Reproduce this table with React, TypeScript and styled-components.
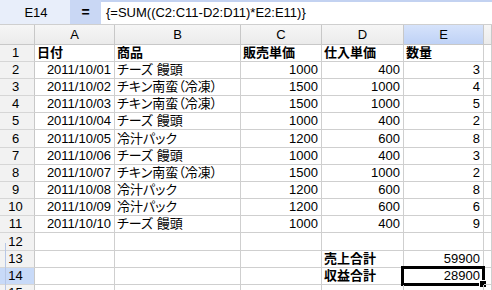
import React from 'react';
import styled, { createGlobalStyle } from 'styled-components';

const GlobalStyle = createGlobalStyle`
  body {
    margin: 0;
    background: #ffffff;
    font-family: "Liberation Sans", "Noto Sans CJK JP", sans-serif;
    font-size: 13px;
    color: #000;
  }
`;

const Sheet = styled.div`
  width: 492px;
  height: 290px;
  overflow: hidden;
  position: relative;
  background: #fff;
`;

const FormulaBar = styled.div`
  display: flex;
  height: 24px;
  background: #e8eefa;
`;

const NameBox = styled.div`
  width: 70px;
  display: flex;
  align-items: center;
  justify-content: center;
  padding-left: 2px;
  box-sizing: border-box;
`;

const EqualsBox = styled.div`
  width: 31px;
  display: flex;
  align-items: center;
  justify-content: center;
  background: #c9d7f4;
  font-weight: bold;
  font-size: 14px;
`;

const FormulaInput = styled.div`
  flex: 1;
  background: #fff;
  border-top: 2px solid #c3d2f1;
  display: flex;
  align-items: center;
  padding-left: 5px;
  padding-bottom: 2px;
  box-sizing: border-box;
`;

const Grid = styled.div`
  display: grid;
  grid-template-columns: 35px 80px 126px 81px 82px 80px 1fr;
  grid-template-rows: 20px 16.6px repeat(14, 17.2px);
  border-top: 1px solid #cfcfcf;
`;

const ColHead = styled.div<{ $active?: boolean }>`
  box-sizing: border-box;
  border-right: 1px solid #c8c8c8;
  border-bottom: 1px solid #c8c8c8;
  background: ${(p) =>
    p.$active
      ? 'linear-gradient(#d6e3fb, #bfd2f6)'
      : 'linear-gradient(#f6f6f6, #ebebeb)'};
  display: flex;
  align-items: center;
  justify-content: center;
  font-size: 13px;
`;

const RowHead = styled.div<{ $active?: boolean }>`
  box-sizing: border-box;
  border-right: 1px solid #c8c8c8;
  border-bottom: 1px solid #d6d6d6;
  background: ${(p) => (p.$active ? '#c8daf8' : '#f2f2f2')};
  display: flex;
  align-items: flex-end;
  justify-content: center;
  padding-right: 3px;
  padding-bottom: 1px;
  line-height: 15px;
`;

const Cell = styled.div<{ $align?: 'left' | 'right'; $bold?: boolean }>`
  position: relative;
  box-sizing: border-box;
  border-right: 1px solid #cfcfcf;
  border-bottom: 1px solid #cfcfcf;
  display: flex;
  align-items: flex-end;
  justify-content: ${(p) => (p.$align === 'right' ? 'flex-end' : 'flex-start')};
  padding: 0 3px 1px 2px;
  line-height: 15px;
  white-space: nowrap;
  overflow: visible;
  font-weight: ${(p) => (p.$bold ? 'bold' : 'normal')};
  font-feature-settings: "palt";
`;

const Selection = styled.div`
  position: absolute;
  left: -3px;
  top: -2px;
  right: -2px;
  bottom: -2px;
  border: 3px solid #000;
  pointer-events: none;
`;

const FillHandle = styled.div`
  position: absolute;
  right: -5px;
  bottom: -5px;
  width: 6px;
  height: 6px;
  background: #000;
  border: 1px solid #fff;
`;

const GhostEdge = styled.div`
  position: absolute;
  left: 5px;
  top: 243px;
  bottom: 0;
  width: 1px;
  background: #b7c7e6;
`;

type Row = [string, string, number, number, number];

const data: Row[] = [
  ['2011/10/01', 'チーズ 饅頭', 1000, 400, 3],
  ['2011/10/02', 'チキン南蛮（冷凍）', 1500, 1000, 4],
  ['2011/10/03', 'チキン南蛮（冷凍）', 1500, 1000, 5],
  ['2011/10/04', 'チーズ 饅頭', 1000, 400, 2],
  ['2011/10/05', '冷汁パック', 1200, 600, 8],
  ['2011/10/06', 'チーズ 饅頭', 1000, 400, 3],
  ['2011/10/07', 'チキン南蛮（冷凍）', 1500, 1000, 2],
  ['2011/10/08', '冷汁パック', 1200, 600, 8],
  ['2011/10/09', '冷汁パック', 1200, 600, 6],
  ['2011/10/10', 'チーズ 饅頭', 1000, 400, 9],
];

const cols = ['A', 'B', 'C', 'D', 'E'];

const App = () => {
  const sales = data.reduce((s, r) => s + r[2] * r[4], 0);
  const profit = data.reduce((s, r) => s + (r[2] - r[3]) * r[4], 0);

  return (
    <Sheet>
      <GlobalStyle />
      <FormulaBar>
        <NameBox>E14</NameBox>
        <EqualsBox>=</EqualsBox>
        <FormulaInput>{'{=SUM((C2:C11-D2:D11)*E2:E11)}'}</FormulaInput>
      </FormulaBar>
      <Grid>
        <ColHead />
        {cols.map((c) => (
          <ColHead key={c} $active={c === 'E'}>
            {c}
          </ColHead>
        ))}
        <ColHead />

        <RowHead>1</RowHead>
        <Cell $bold>日付</Cell>
        <Cell $bold>商品</Cell>
        <Cell $bold>販売単価</Cell>
        <Cell $bold>仕入単価</Cell>
        <Cell $bold>数量</Cell>
        <Cell />

        {data.map((r, i) => (
          <React.Fragment key={i}>
            <RowHead>{i + 2}</RowHead>
            <Cell $align="right">{r[0]}</Cell>
            <Cell>{r[1]}</Cell>
            <Cell $align="right">{r[2]}</Cell>
            <Cell $align="right">{r[3]}</Cell>
            <Cell $align="right">{r[4]}</Cell>
            <Cell />
          </React.Fragment>
        ))}

        <RowHead>12</RowHead>
        <Cell />
        <Cell />
        <Cell />
        <Cell />
        <Cell />
        <Cell />

        <RowHead>13</RowHead>
        <Cell />
        <Cell />
        <Cell />
        <Cell $bold>売上合計</Cell>
        <Cell $align="right">{sales}</Cell>
        <Cell />

        <RowHead $active>14</RowHead>
        <Cell />
        <Cell />
        <Cell />
        <Cell $bold>収益合計</Cell>
        <Cell $align="right">
          {profit}
          <Selection>
            <FillHandle />
          </Selection>
        </Cell>
        <Cell />

        <RowHead>15</RowHead>
        <Cell />
        <Cell />
        <Cell />
        <Cell />
        <Cell />
        <Cell />
      </Grid>
      <GhostEdge />
    </Sheet>
  );
};

export default App;
